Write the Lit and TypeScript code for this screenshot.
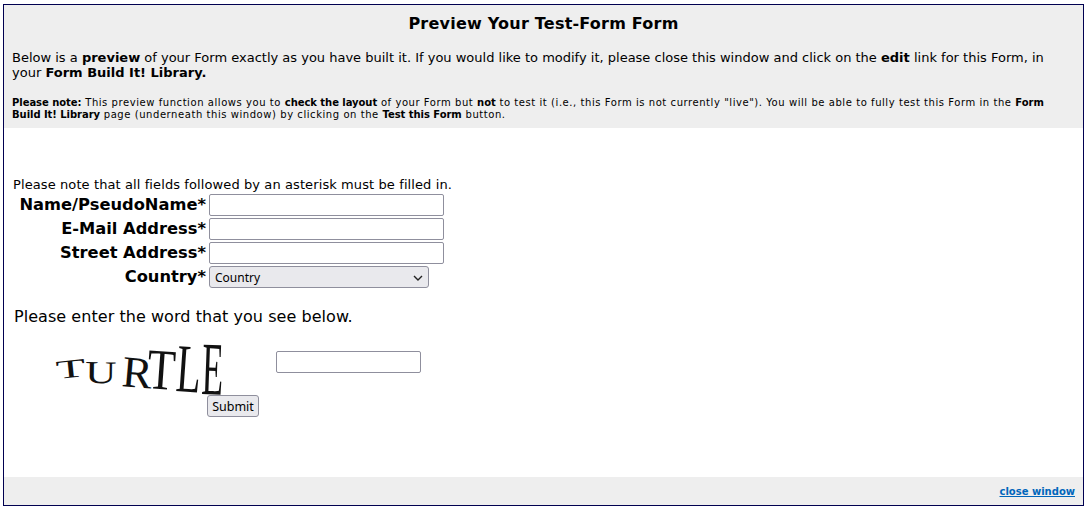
import { LitElement, html, css, svg } from "lit";
import { customElement } from "lit/decorators.js";

// char, x, baseline y, font size, rotate, scaleX, scaleY
const LETTERS: [string, number, number, number, number, number, number][] = [
  ["T", 53, 379, 26, -6, 1.85, 1],
  ["U", 81, 383, 32, 1, 1.35, 1],
  ["R", 117, 386, 42, 5, 1.08, 1.05],
  ["T", 142, 388, 50, 4, 0.92, 1.15],
  ["L", 171, 391, 52, 4, 0.78, 1.32],
  ["E", 197, 394, 52, 2, 0.68, 1.45],
];

@customElement("app-root")
export class AppRoot extends LitElement {
  static styles = css`
    :host {
      display: block;
      font-family: "DejaVu Sans", Verdana, sans-serif;
      color: #000;
      background: #fff;
    }
    .window {
      box-sizing: border-box;
      margin: 4px 5px 0 3px;
      height: 502px;
      border: 1px solid #000050;
      display: flex;
      flex-direction: column;
    }
    .head {
      background: #eeeeee;
      height: 123px;
      box-sizing: border-box;
      padding: 10px 8px 0 8px;
    }
    h1 {
      margin: 0;
      font-size: 16px;
      line-height: 18px;
      letter-spacing: 0.22px;
      font-weight: bold;
      text-align: center;
    }
    .intro {
      margin: 17px 0 0;
      font-size: 13px;
      line-height: 15px;
    }
    .small {
      margin: 17px 0 0;
      font-size: 10px;
      line-height: 12px;
      letter-spacing: 0.56px;
    }
    .small b { letter-spacing: -0.05px; }
    .body {
      flex: 1;
      padding: 49px 0 0 9px;
    }
    .req {
      font-size: 13px;
      line-height: 15px;
      letter-spacing: 0.1px;
    }
    .rows {
      display: grid;
      grid-template-columns: 196px auto;
      justify-content: start;
      row-gap: 2px;
      margin-top: 2px;
    }
    .lbl {
      font-size: 16.3px;
      font-weight: bold;
      line-height: 22px;
      text-align: right;
      padding-right: 3px;
      white-space: nowrap;
    }
    input {
      box-sizing: border-box;
      height: 22px;
      border: 1px solid #8f8f9d;
      border-radius: 2px;
      background: #fff;
      padding: 0 2px;
      margin: 0;
      display: block;
    }
    .wide { width: 235px; }
    .sel { position: relative; width: 220px; height: 22px; }
    .sel svg { position: absolute; right: 6px; top: 9px; pointer-events: none; }
    select {
      appearance: none;
      box-sizing: border-box;
      display: block;
      width: 220px;
      height: 22px;
      margin: 0;
      padding: 0 0 0 5px;
      font-family: "Noto Sans", sans-serif;
      font-size: 12px;
      border: 1px solid #8f8f9d;
      border-radius: 3px;
      background: #e9e9ed;
      color: #000;
    }
    .word {
      margin: 19px 0 0 1px;
      font-size: 16px;
      line-height: 20px;
      letter-spacing: 0.05px;
    }
    .cap {
      display: flex;
      align-items: flex-start;
      margin-top: 8px;
      margin-left: 41px;
      height: 60px;
    }
    .cap svg { display: block; flex: none; overflow: visible; }
    .cap input { width: 145px; margin: 16px 0 0 46px; }
    .sub { padding-left: 194px; }
    button {
      box-sizing: border-box;
      display: block;
      width: 52px;
      height: 22px;
      padding: 0;
      font-family: "Noto Sans", sans-serif;
      font-size: 12.5px;
      border: 1px solid #8f8f9d;
      border-radius: 3px;
      background: #e9e9ed;
      color: #000;
    }
    .foot {
      background: #eeeeee;
      height: 28px;
      box-sizing: border-box;
      display: flex;
      justify-content: flex-end;
      align-items: center;
      padding: 1px 8px 0 0;
    }
    a {
      font-size: 10px;
      font-weight: bold;
      color: #0066bb;
      text-decoration: underline;
    }
  `;

  render() {
    return html`
      <div class="window">
        <div class="head">
          <h1>Preview Your Test-Form Form</h1>
          <p class="intro">
            Below is a <b>preview</b> of your Form exactly as you have built it. If you would like to modify it, please close this window and click on the <b>edit</b> link for this Form, in your <b>Form Build It! Library.</b>
          </p>
          <p class="small">
            <b>Please note:</b> This preview function allows you to <b>check the layout</b> of your Form but <b>not</b> to test it (i.e., this Form is not currently "live"). You will be able to fully test this Form in the <b>Form Build It! Library</b> page (underneath this window) by clicking on the <b>Test this Form</b> button.
          </p>
        </div>
        <div class="body">
          <div class="req">Please note that all fields followed by an asterisk must be filled in.</div>
          <div class="rows">
            <div class="lbl">Name/PseudoName*</div><input class="wide" type="text" />
            <div class="lbl">E-Mail Address*</div><input class="wide" type="text" />
            <div class="lbl">Street Address*</div><input class="wide" type="text" />
            <div class="lbl">Country*</div>
            <div class="sel">
              <select><option>Country</option></select>
              <svg width="10" height="6" viewBox="0 0 10 6"><path d="M1 1l4 4 4-4" fill="none" stroke="#222" stroke-width="1.4"/></svg>
            </div>
          </div>
          <div class="word">Please enter the word that you see below.</div>
          <div class="cap">
            <svg width="176" height="60" viewBox="50 335 176 60">
              ${LETTERS.map(
                ([c, x, y, s, r, sx, sy]) => svg`<text
                  font-family="Liberation Serif, serif"
                  font-size=${s}
                  fill="#111"
                  transform="translate(${x} ${y}) rotate(${r}) scale(${sx} ${sy})">${c}</text>`
              )}
            </svg>
            <input type="text" />
          </div>
          <div class="sub"><button>Submit</button></div>
        </div>
        <div class="foot"><a href="#">close window</a></div>
      </div>
    `;
  }
}
